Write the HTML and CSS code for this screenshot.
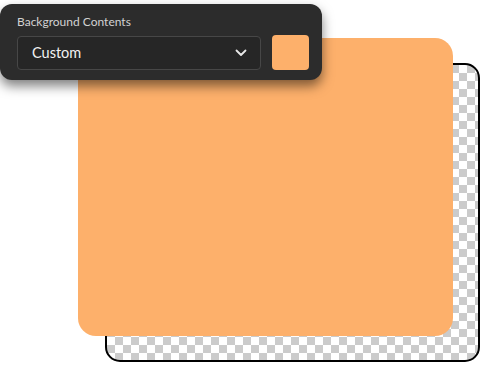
FILE: index.html
```html
<!DOCTYPE html>
<html>
<head>
<meta charset="utf-8">
<link rel="stylesheet" href="styles.css">
</head>
<body>
<div class="canvas">
  <div class="back-card"></div>
  <div class="front-card"></div>
  <div class="panel">
    <div class="label">Background Contents</div>
    <div class="row">
      <div class="select">
        <span class="value">Custom</span>
        <svg class="chev" width="12" height="8" viewBox="0 0 12 8"><path d="M1.5 1.5 L6 6 L10.5 1.5" fill="none" stroke="#e8e8e8" stroke-width="1.8" stroke-linecap="round" stroke-linejoin="round"/></svg>
      </div>
      <div class="swatch"></div>
    </div>
  </div>
</div>
</body>
</html>
```

FILE: styles.css
```css
html, body {
  margin: 0;
  padding: 0;
  background: #ffffff;
}
.canvas {
  position: relative;
  width: 500px;
  height: 375px;
  overflow: hidden;
  font-family: Lato, "Open Sans", sans-serif;
}
.back-card {
  position: absolute;
  left: 105px;
  top: 63px;
  width: 371px;
  height: 295px;
  border: 2px solid #000;
  border-radius: 15px;
  background-color: #fff;
  background-image:
    linear-gradient(45deg, #cbcbcb 25%, transparent 25%, transparent 75%, #cbcbcb 75%),
    linear-gradient(45deg, #cbcbcb 25%, transparent 25%, transparent 75%, #cbcbcb 75%);
  background-size: 16px 16px;
  background-position: 0 0, 8px 8px;
}
.front-card {
  position: absolute;
  left: 78px;
  top: 38px;
  width: 375px;
  height: 298px;
  border-radius: 18px;
  background: #fdb06b;
}
.panel {
  position: absolute;
  left: 0;
  top: 4px;
  width: 322px;
  height: 76px;
  box-sizing: border-box;
  padding: 10px 13px 0 17px;
  background: #2c2c2c;
  border-radius: 12px;
  box-shadow: 0 6px 12px rgba(0,0,0,0.5);
  display: flex;
  flex-direction: column;
  gap: 6px;
}
.label {
  color: #d2d2d2;
  font-size: 12px;
  line-height: 15px;
}
.row {
  display: flex;
  align-items: center;
  gap: 11px;
}
.select {
  width: 245px;
  height: 34px;
  box-sizing: border-box;
  border: 1px solid #474747;
  border-radius: 4px;
  background: #262626;
  display: flex;
  align-items: center;
  justify-content: space-between;
  padding: 0 13px 0 14px;
}
.value {
  color: #f2f2f2;
  font-size: 14.5px;
}
.chev {
  display: block;
}
.swatch {
  width: 37px;
  height: 35px;
  border-radius: 4px;
  background: #fdb06b;
}
```
